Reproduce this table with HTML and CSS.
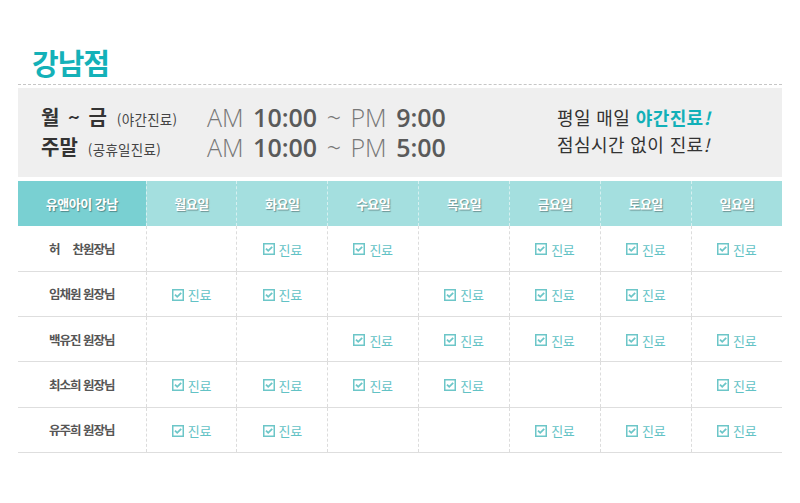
FILE: index.html
```html
<!DOCTYPE html>
<html lang="ko">
<head>
<meta charset="utf-8">
<link rel="stylesheet" href="styles.css">
</head>
<body>
<div class="wrap">
  <h1 class="title">강남점</h1>
  <div class="rule"></div>
  <div class="hours">
    <div class="days">
      <div class="line"><b>월 <span class="tl">~</span> 금</b><span class="note">(야간진료)</span></div>
      <div class="line"><b>주말</b><span class="note">(공휴일진료)</span></div>
    </div>
    <div class="times">
      <div class="line"><span class="ap">AM</span> <span class="num">10:00</span> <span class="ap">~ PM</span> <span class="num">9:00</span></div>
      <div class="line"><span class="ap">AM</span> <span class="num">10:00</span> <span class="ap">~ PM</span> <span class="num">5:00</span></div>
    </div>
    <div class="promo">
      <div class="pline">평일 매일 <strong>야간진료<i>!</i></strong></div>
      <div class="pline">점심시간 없이 진료<i>!</i></div>
    </div>
  </div>
  <table class="sched">
    <colgroup><col class="c0"><col><col><col><col><col><col><col></colgroup>
    <thead>
      <tr><th class="brand">유앤아이 강남</th><th>월요일</th><th>화요일</th><th>수요일</th><th>목요일</th><th>금요일</th><th>토요일</th><th>일요일</th></tr>
    </thead>
    <tbody id="body"></tbody>
  </table>
</div>
<script>
var rows = [
  ['허<span class="gap"> </span>찬원장님', [0,1,1,0,1,1,1]],
  ["임채원 원장님", [1,1,0,1,1,1,0]],
  ["백유진 원장님", [0,0,1,1,1,1,1]],
  ["최소희 원장님", [1,1,1,1,0,0,1]],
  ["유주희 원장님", [1,1,0,0,1,1,1]]
];
var chk = '<span class="ck"><svg width="12" height="12" viewBox="0 0 12 12"><rect x="0.75" y="0.75" width="10.5" height="10.5" fill="#fff" stroke="#6cc6c8" stroke-width="1.5"/><path d="M3 5.6 L5.2 7.8 L9.2 3.8" fill="none" stroke="#6cc6c8" stroke-width="1.8"/></svg>진료</span>';
var html = "";
rows.forEach(function(r){
  html += '<tr><td class="name">' + r[0] + '</td>';
  r[1].forEach(function(v){ html += '<td>' + (v ? chk : '') + '</td>'; });
  html += '</tr>';
});
document.getElementById("body").innerHTML = html;
</script>
</body>
</html>
```
FILE: styles.css
```css
* { box-sizing: border-box; }
html, body { margin: 0; padding: 0; background: #fff; }
body {
  font-family: "Noto Sans CJK KR", "Noto Sans", sans-serif;
  color: #333;
}
.wrap {
  width: 764px;
  margin-left: 18px;
  padding-top: 40px;
}
.title {
  margin: 0 0 0 14px;
  font-size: 29px;
  line-height: 44px;
  font-weight: 700;
  color: #14b1b8;
  letter-spacing: -1px;
}
.rule {
  border-top: 1px dashed #c6c6c6;
  height: 4px;
}
.hours {
  background: #efefef;
  height: 89px;
  padding: 14px 0 0 23px;
  display: flex;
}
.line {
  height: 30px;
  line-height: 30px;
  white-space: nowrap;
}
.days { width: 166px; }
.days b {
  font-size: 20px;
  font-weight: 700;
  color: #333;
  margin-right: 10px;
}
.days .tl { margin: 0 3px; }
.days .note {
  font-size: 13.5px;
  color: #444;
  letter-spacing: 0.3px;
}
.times {
  width: 350px;
  font-family: "Open Sans", "Noto Sans", sans-serif;
  font-size: 25px;
  word-spacing: 3px;
}
.times .ap { font-weight: 300; color: #777; }
.times .num { font-weight: 600; color: #5a5a5a; }
.promo {
  padding-top: 2px;
}
.pline {
  font-size: 18px;
  line-height: 27px;
  color: #333;
  letter-spacing: 0.4px;
}
.pline strong { color: #11b0b8; font-weight: 700; }
.pline i { font-style: italic; }
.sched {
  margin-top: 4px;
  width: 764px;
  border-collapse: collapse;
  table-layout: fixed;
}
.c0 { width: 128px; }
.sched th {
  height: 45px;
  padding: 0;
  background: #a4dfdf;
  color: #fff;
  font-size: 13px;
  font-weight: 700;
  letter-spacing: -0.5px;
  text-shadow: 1px 1px 1px rgba(0,0,0,0.35);
  border-left: 1px dashed #d6f0f0;
}
.sched th.brand { background: #79d0d2; border-left: 0; }
.sched td {
  height: 45.25px;
  padding: 0;
  text-align: center;
  border-bottom: 1px solid #dedede;
  border-left: 1px dashed #dcdcdc;
}
.sched td.name {
  border-left: 0;
  font-size: 12.5px;
  font-weight: 700;
  color: #555;
  letter-spacing: -1px;
}
.gap { display: inline-block; width: 13px; }
.ck {
  display: inline-flex;
  align-items: center;
  gap: 4px;
  font-size: 13px;
  color: #62c2c5;
  letter-spacing: -0.3px;
}
.ck svg { display: block; }
```
